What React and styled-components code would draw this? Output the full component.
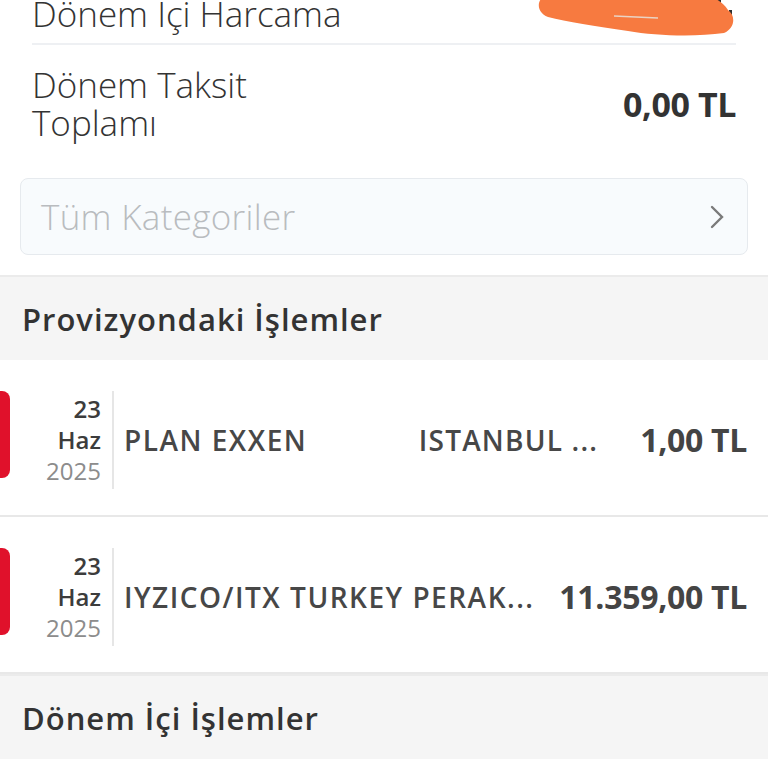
import React from "react";
import styled, { createGlobalStyle } from "styled-components";

const Global = createGlobalStyle`
  html, body {
    margin: 0;
    padding: 0;
    background: #ffffff;
    overflow: hidden;
  }
  * { box-sizing: border-box; }
`;

const transactions = [
  { day: "23", month: "Haz", year: "2025", name: "PLAN EXXEN", city: "ISTANBUL ...", amount: "1,00 TL" },
  { day: "23", month: "Haz", year: "2025", name: "IYZICO/ITX TURKEY PERAK...", city: "", amount: "11.359,00 TL" },
];

export default function App() {
  return (
    <Page>
      <Global />
      <Summary>
        <SummaryRow top>
          <Label>Dönem İçi Harcama</Label>
          <Scribble viewBox="0 0 200 40" aria-hidden="true">
            <rect x="180" y="0" width="5" height="20" fill="#2f2f2f" />
            <rect x="193" y="12" width="3" height="6" fill="#2f2f2f" />
            <path
              d="M6 0 L178 0 C184 3 188 6 192 12 C200 18 199 30 188 35 C160 39 120 38 92 33 C60 28 30 24 12 19 C1 15 1 4 6 0 Z"
              fill="#f77a40"
            />
            <path d="M78 18 L122 20" stroke="#ead3c4" strokeWidth="1.5" />
          </Scribble>
        </SummaryRow>
        <SummaryRow>
          <Label>
            Dönem Taksit
            <br />
            Toplamı
          </Label>
          <Total>0,00 TL</Total>
        </SummaryRow>
      </Summary>

      <FilterBox>
        <Placeholder>Tüm Kategoriler</Placeholder>
        <svg width="16" height="26" viewBox="0 0 16 26" fill="none">
          <path d="M3 3 L13 13 L3 23" stroke="#7a7a7a" strokeWidth="2.4" strokeLinecap="round" />
        </svg>
      </FilterBox>

      <SectionHeader spaced>Provizyondaki İşlemler</SectionHeader>
      {transactions.map((t, i) => (
        <TxRow key={i}>
          <Marker />
          <DateCol>
            <Day>{t.day}</Day>
            <Day>{t.month}</Day>
            <Year>{t.year}</Year>
          </DateCol>
          <TxName>{t.name}</TxName>
          {t.city && <TxCity>{t.city}</TxCity>}
          <TxAmount>{t.amount}</TxAmount>
        </TxRow>
      ))}
      <SectionHeader>Dönem İçi İşlemler</SectionHeader>
    </Page>
  );
}

const Page = styled.div`
  width: 768px;
  height: 768px;
  overflow: hidden;
  background: #fff;
  font-family: "Open Sans", "Noto Sans", sans-serif;
`;

const Summary = styled.div`
  padding: 0 32px;
  margin-top: -16px;
`;

const SummaryRow = styled.div`
  display: flex;
  align-items: center;
  justify-content: space-between;
  height: ${(p) => (p.top ? "61px" : "118px")};
  border-bottom: ${(p) => (p.top ? "2px solid #eef0f3" : "none")};
  position: relative;
`;

const Label = styled.div`
  font-size: 35px;
  font-weight: 300;
  line-height: 38px;
  color: #333;
`;

const Scribble = styled.svg`
  position: absolute;
  right: 0;
  top: 14px;
  width: 200px;
  height: 40px;
`;

const Total = styled.div`
  font-size: 34px;
  font-weight: 700;
  color: #333;
  letter-spacing: -0.4px;
`;

const FilterBox = styled.div`
  margin: 15px 20px 0;
  height: 77px;
  border: 1.5px solid #e6eaee;
  border-radius: 8px;
  background: #f8fbfd;
  display: flex;
  align-items: center;
  justify-content: space-between;
  padding: 0 22px 0 20px;
`;

const Placeholder = styled.span`
  font-size: 35px;
  font-weight: 300;
  color: #b9bcbf;
  letter-spacing: 0.3px;
`;

const SectionHeader = styled.div`
  margin-top: ${(p) => (p.spaced ? "20px" : "0")};
  height: 85px;
  background: #f5f5f5;
  border-top: 2px solid #ebebeb;
  display: flex;
  align-items: center;
  padding-left: 22px;
  font-size: 31px;
  font-weight: 600;
  color: #333;
  letter-spacing: 1px;
`;

const TxRow = styled.div`
  display: flex;
  align-items: center;
  height: 157px;
  padding-top: 4px;
  border-bottom: 2px solid #e8e8e8;
  color: #444;
`;

const Marker = styled.div`
  width: 10px;
  height: 87px;
  background: #e0112b;
  border-radius: 0 8px 8px 0;
  margin-top: -10px;
`;

const DateCol = styled.div`
  width: 104px;
  border-right: 2px solid #e6e6e6;
  display: flex;
  flex-direction: column;
  align-items: flex-end;
  padding: 2px 11px 3px 0;
`;

const Day = styled.span`
  font-size: 24px;
  font-weight: 600;
  line-height: 31px;
  color: #3c3c3c;
`;

const Year = styled.span`
  font-size: 24px;
  font-weight: 400;
  line-height: 31px;
  color: #8c8c8c;
`;

const TxName = styled.div`
  margin-left: 10px;
  font-size: 28px;
  font-weight: 600;
  color: #474747;
  letter-spacing: 1.5px;
  flex: 1;
  white-space: nowrap;
`;

const TxCity = styled.div`
  font-size: 28px;
  font-weight: 600;
  color: #474747;
  letter-spacing: 1.2px;
  margin-right: 42px;
`;

const TxAmount = styled.div`
  font-size: 32px;
  font-weight: 700;
  color: #444;
  margin-right: 21px;
  letter-spacing: -0.3px;
  white-space: nowrap;
`;
